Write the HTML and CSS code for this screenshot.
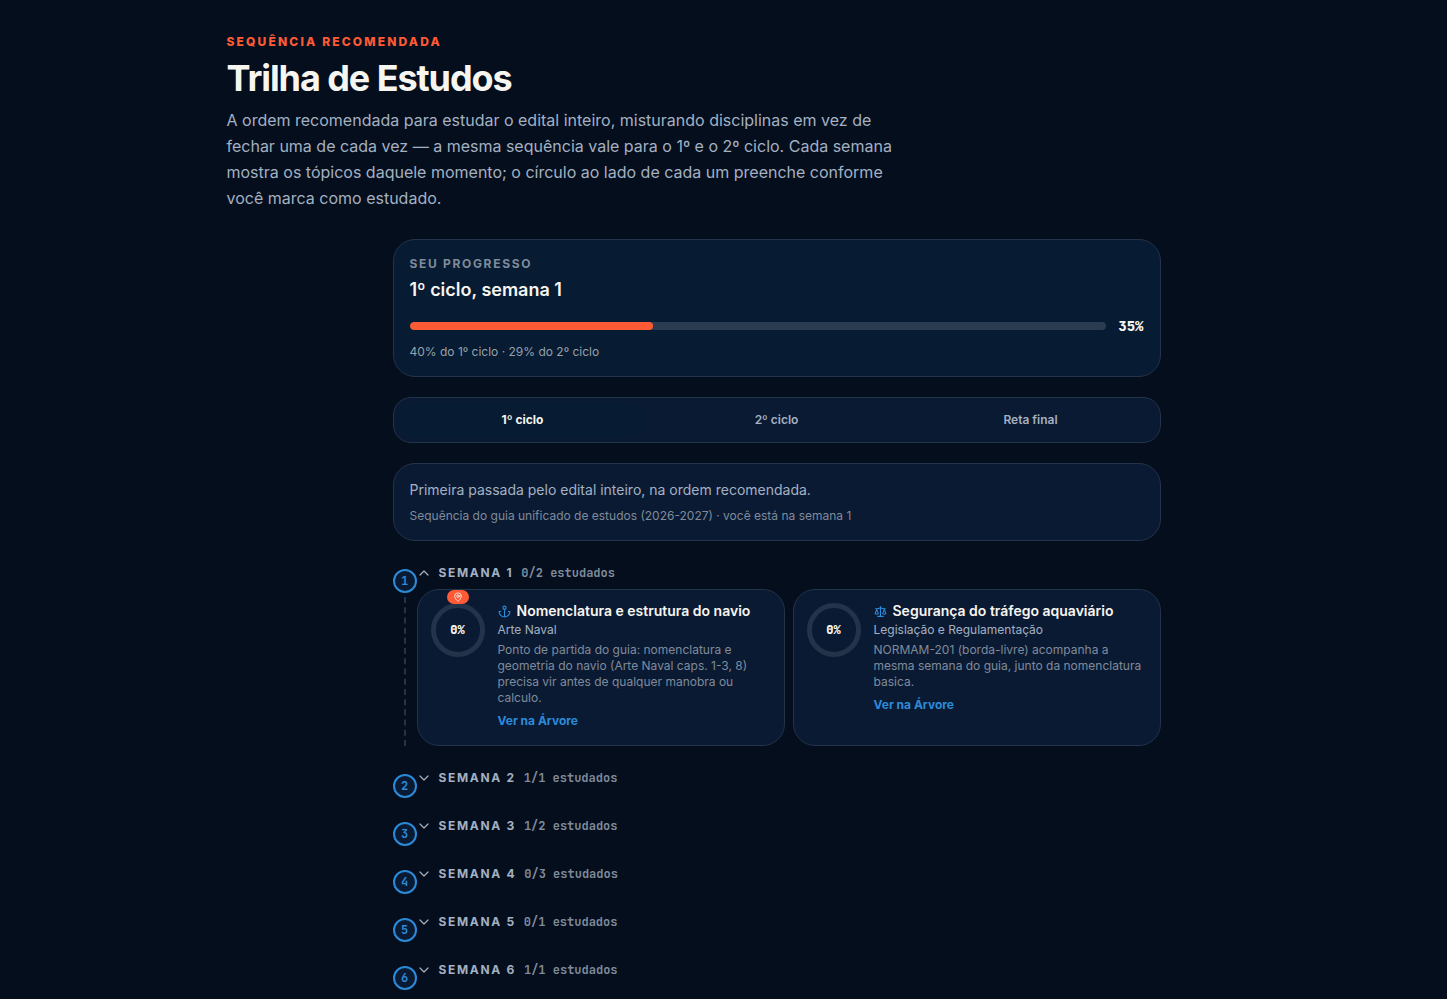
FILE: index.html
```html
<!DOCTYPE html>
<html lang="pt-BR">

<head>
    <meta charset="UTF-8">
    <meta name="viewport" content="width=device-width, initial-scale=1.0">
    <title>Trilha de Estudos</title>
    <link rel="stylesheet" href="styles.css">
</head>

<body>
    <main class="page">
        <header class="page-header">
            <p class="eyebrow">Sequência recomendada</p>
            <h1>Trilha de Estudos</h1>
            <p class="intro">A ordem recomendada para estudar o edital inteiro, misturando disciplinas em vez de fechar uma de cada vez — a mesma sequência vale para o 1º e o 2º ciclo. Cada semana mostra os tópicos daquele momento; o círculo ao lado de cada um preenche conforme você marca como estudado.</p>
        </header>

        <div class="trail">
            <!-- Progresso -->
            <section class="card progress-card">
                <p class="progress-label">Seu progresso</p>
                <h2>1º ciclo, semana 1</h2>
                <div class="progress-row">
                    <div class="progress-track">
                        <div class="progress-fill" style="width: 35%"></div>
                    </div>
                    <span class="progress-value">35%</span>
                </div>
                <p class="progress-detail">40% do 1º ciclo · 29% do 2º ciclo</p>
            </section>

            <!-- Abas dos ciclos -->
            <div class="tabs" role="tablist">
                <button type="button" class="tab active" role="tab" aria-selected="true">1º ciclo</button>
                <button type="button" class="tab" role="tab" aria-selected="false">2º ciclo</button>
                <button type="button" class="tab" role="tab" aria-selected="false">Reta final</button>
            </div>

            <section class="card cycle-card">
                <p class="cycle-text">Primeira passada pelo edital inteiro, na ordem recomendada.</p>
                <p class="cycle-source">Sequência do guia unificado de estudos (2026-2027) · você está na semana 1</p>
            </section>

            <!-- Semanas -->
            <ol class="weeks">
                <li class="week">
                    <div class="rail">
                        <span class="week-number">1</span>
                        <span class="rail-line"></span>
                    </div>
                    <div class="week-body">
                        <button type="button" class="week-toggle" aria-expanded="true">
                            <svg class="chevron" viewBox="0 0 14 14"><path d="M3 9l4-4 4 4" /></svg>
                            <span class="week-title">Semana 1</span>
                            <span class="week-count">0/2 estudados</span>
                        </button>
                        <div class="topics">
                            <article class="topic">
                                <div class="ring">
                                    <span>0%</span>
                                    <span class="here">
                                        <svg viewBox="0 0 24 24"><path d="M20 10c0 5-5.500 10.200-7.400 11.800a1 1 0 0 1-1.200 0C9.500 20.200 4 15 4 10a8 8 0 0 1 16 0z" /><circle cx="12" cy="10" r="3" /></svg>
                                    </span>
                                </div>
                                <div class="topic-info">
                                    <h3>
                                        <svg class="topic-icon" viewBox="0 0 24 24"><circle cx="12" cy="5" r="3" /><path d="M12 8v14M5 12H2a10 10 0 0 0 20 0h-3" /></svg>
                                        Nomenclatura e estrutura do navio
                                    </h3>
                                    <p class="subject">Arte Naval</p>
                                    <p class="note">Ponto de partida do guia: nomenclatura e geometria do navio (Arte Naval caps. 1-3, 8) precisa vir antes de qualquer manobra ou calculo.</p>
                                    <a href="#arvore">Ver na Árvore</a>
                                </div>
                            </article>
                            <article class="topic">
                                <div class="ring"><span>0%</span></div>
                                <div class="topic-info">
                                    <h3>
                                        <svg class="topic-icon" viewBox="0 0 24 24"><path d="M16 16l3-8 3 8c-.9.7-1.900 1-3 1s-2.100-.3-3-1zM2 16l3-8 3 8c-.9.7-1.900 1-3 1s-2.100-.3-3-1zM7 21h10M12 3v18M3 7h2c2 0 5-1 7-2 2 1 5 2 7 2h2" /></svg>
                                        Segurança do tráfego aquaviário
                                    </h3>
                                    <p class="subject">Legislação e Regulamentação</p>
                                    <p class="note">NORMAM-201 (borda-livre) acompanha a mesma semana do guia, junto da nomenclatura basica.</p>
                                    <a href="#arvore">Ver na Árvore</a>
                                </div>
                            </article>
                        </div>
                    </div>
                </li>
                <li class="week">
                    <div class="rail"><span class="week-number">2</span></div>
                    <div class="week-body">
                        <button type="button" class="week-toggle" aria-expanded="false">
                            <svg class="chevron" viewBox="0 0 14 14"><path d="M3 5l4 4 4-4" /></svg>
                            <span class="week-title">Semana 2</span>
                            <span class="week-count">1/1 estudados</span>
                        </button>
                    </div>
                </li>
                <li class="week">
                    <div class="rail"><span class="week-number">3</span></div>
                    <div class="week-body">
                        <button type="button" class="week-toggle" aria-expanded="false">
                            <svg class="chevron" viewBox="0 0 14 14"><path d="M3 5l4 4 4-4" /></svg>
                            <span class="week-title">Semana 3</span>
                            <span class="week-count">1/2 estudados</span>
                        </button>
                    </div>
                </li>
                <li class="week">
                    <div class="rail"><span class="week-number">4</span></div>
                    <div class="week-body">
                        <button type="button" class="week-toggle" aria-expanded="false">
                            <svg class="chevron" viewBox="0 0 14 14"><path d="M3 5l4 4 4-4" /></svg>
                            <span class="week-title">Semana 4</span>
                            <span class="week-count">0/3 estudados</span>
                        </button>
                    </div>
                </li>
                <li class="week">
                    <div class="rail"><span class="week-number">5</span></div>
                    <div class="week-body">
                        <button type="button" class="week-toggle" aria-expanded="false">
                            <svg class="chevron" viewBox="0 0 14 14"><path d="M3 5l4 4 4-4" /></svg>
                            <span class="week-title">Semana 5</span>
                            <span class="week-count">0/1 estudados</span>
                        </button>
                    </div>
                </li>
                <li class="week">
                    <div class="rail"><span class="week-number">6</span></div>
                    <div class="week-body">
                        <button type="button" class="week-toggle" aria-expanded="false">
                            <svg class="chevron" viewBox="0 0 14 14"><path d="M3 5l4 4 4-4" /></svg>
                            <span class="week-title">Semana 6</span>
                            <span class="week-count">1/1 estudados</span>
                        </button>
                    </div>
                </li>
            </ol>
        </div>
    </main>
</body>

</html>
```
FILE: styles.css
```css
:root {
    --bg: #050e1d;
    --surface: #0b1a33;
    --surface-deep: #071b32;
    --line: #22334a;
    --text: #f7f5f0;
    --text-soft: #a3b1c2;
    --text-muted: #7f8b9b;
    --blue: #2b8bd8;
    --orange: #ff5a36;
    --mono: "JetBrains Mono", "Liberation Mono", monospace;
}

* {
    box-sizing: border-box;
}

body,
h1,
h2,
h3,
p,
ol {
    margin: 0;
    padding: 0;
}

body {
    background: var(--bg);
    color: var(--text);
    font-family: Inter, sans-serif;
    padding-left: 106px;
}

button {
    border: none;
    background: none;
    font-family: inherit;
    cursor: pointer;
}

svg {
    fill: none;
    stroke: currentColor;
    stroke-width: 2;
    stroke-linecap: round;
    stroke-linejoin: round;
}

.page {
    max-width: 1100px;
    margin: 0 auto;
    padding-top: 32px;
}

/* Header */

.eyebrow {
    color: var(--orange);
    font-size: 12px;
    line-height: 20px;
    font-weight: 800;
    letter-spacing: 0.18em;
    text-transform: uppercase;
}

h1 {
    margin-top: 4px;
    font-size: 36px;
    line-height: 44px;
    font-weight: 700;
    letter-spacing: -0.03em;
}

.intro {
    max-width: 672px;
    margin-top: 7px;
    color: var(--text-soft);
    font-size: 16px;
    line-height: 26px;
}

.trail {
    display: flex;
    flex-direction: column;
    gap: 20px;
    max-width: 768px;
    margin: 28px auto 0;
}

.card {
    padding: 16px;
    background: var(--surface);
    border: 1px solid var(--line);
    border-radius: 22px;
}

/* Progresso */

.progress-card {
    background: var(--surface-deep);
}

.progress-label {
    color: var(--text-muted);
    font-size: 12px;
    line-height: 16px;
    font-weight: 700;
    letter-spacing: 0.14em;
    text-transform: uppercase;
}

h2 {
    margin-top: 4px;
    font-size: 18px;
    line-height: 28px;
    font-weight: 600;
}

.progress-row {
    display: flex;
    align-items: center;
    gap: 12px;
    margin-top: 12px;
}

.progress-track {
    flex: 1;
    height: 8px;
    background: #2b3b50;
    border-radius: 4px;
    overflow: hidden;
}

.progress-fill {
    height: 100%;
    background: var(--orange);
    border-radius: 4px;
}

.progress-value {
    font-family: var(--mono);
    font-size: 14px;
    line-height: 20px;
    font-weight: 800;
}

.progress-detail {
    margin-top: 8px;
    color: #98a1ac;
    font-size: 12px;
    line-height: 16px;
}

/* Abas */

.tabs {
    display: grid;
    grid-template-columns: repeat(3, 1fr);
    gap: 4px;
    padding: 4px;
    background: var(--surface);
    border: 1px solid var(--line);
    border-radius: 18px;
}

.tab {
    height: 36px;
    padding: 0 0 2px;
    border-radius: 14px;
    color: var(--text-soft);
    font-size: 12px;
    font-weight: 600;
}

.tab.active {
    background: var(--surface-deep);
    color: var(--text);
    font-weight: 700;
}

.cycle-text {
    color: var(--text-soft);
    font-size: 14px;
    line-height: 20px;
}

.cycle-source {
    margin-top: 8px;
    color: var(--text-muted);
    font-size: 12px;
    line-height: 16px;
}

/* Semanas */

.weeks {
    display: flex;
    flex-direction: column;
    gap: 16px;
    list-style: none;
}

.week {
    display: grid;
    grid-template-columns: 24px 1fr;
}

.rail {
    display: flex;
    flex-direction: column;
    align-items: center;
    padding-top: 8px;
}

.week-number {
    display: flex;
    align-items: center;
    justify-content: center;
    width: 24px;
    height: 24px;
    background: var(--surface);
    border: 2px solid var(--blue);
    border-radius: 50%;
    color: var(--blue);
    font-family: var(--mono);
    font-size: 12px;
    font-weight: 700;
}

.rail-line {
    flex: 1;
    margin: 4px 0;
    border-left: 2px dashed var(--line);
}

.week-body {
    padding-bottom: 4px;
}

.week-toggle {
    display: flex;
    align-items: center;
    width: 100%;
    height: 28px;
    padding: 0 0 4px;
    line-height: 16px;
}

.chevron {
    width: 14px;
    height: 14px;
    margin-right: 8px;
    color: var(--text-soft);
    stroke-width: 1.2;
}

.week-title {
    color: var(--text-soft);
    font-size: 12px;
    font-weight: 700;
    letter-spacing: 0.14em;
    text-transform: uppercase;
}

.week-count {
    margin-left: 8px;
    color: var(--text-muted);
    font-family: var(--mono);
    font-size: 12px;
    font-weight: 700;
}

/* Tópicos */

.topics {
    display: grid;
    grid-template-columns: repeat(2, 1fr);
    gap: 8px;
}

.topic {
    display: flex;
    gap: 13px;
    padding: 13px 13px 16px;
    background: var(--surface);
    border: 1px solid var(--line);
    border-radius: 22px;
}

.ring {
    position: relative;
    display: flex;
    flex-shrink: 0;
    align-items: center;
    justify-content: center;
    width: 54px;
    height: 54px;
    border: 5px solid var(--line);
    border-radius: 50%;
    font-family: var(--mono);
    font-size: 12px;
    font-weight: 800;
}

/* Marca o tópico atual, por cima do anel */

.here {
    position: absolute;
    top: -18px;
    left: 11px;
    display: flex;
    align-items: center;
    justify-content: center;
    width: 22px;
    height: 14px;
    background: var(--orange);
    border-radius: 7px;
}

.here svg {
    width: 10px;
    height: 10px;
}

h3 {
    display: flex;
    align-items: center;
    gap: 6px;
    font-size: 14px;
    line-height: 16px;
    font-weight: 600;
}

.topic-icon {
    flex-shrink: 0;
    width: 13px;
    height: 13px;
    color: var(--blue);
}

.subject {
    margin-top: 3px;
    color: var(--text-soft);
    font-size: 12px;
    line-height: 16px;
}

.note {
    margin-top: 4px;
    color: var(--text-muted);
    font-size: 12px;
    line-height: 16px;
}

.topic-info a {
    display: inline-block;
    margin-top: 7px;
    color: var(--blue);
    font-size: 12px;
    line-height: 16px;
    font-weight: 700;
    text-decoration: none;
}

@media (max-width: 768px) {
    body {
        padding: 0 16px;
    }

    .topics {
        grid-template-columns: 1fr;
    }
}
```
